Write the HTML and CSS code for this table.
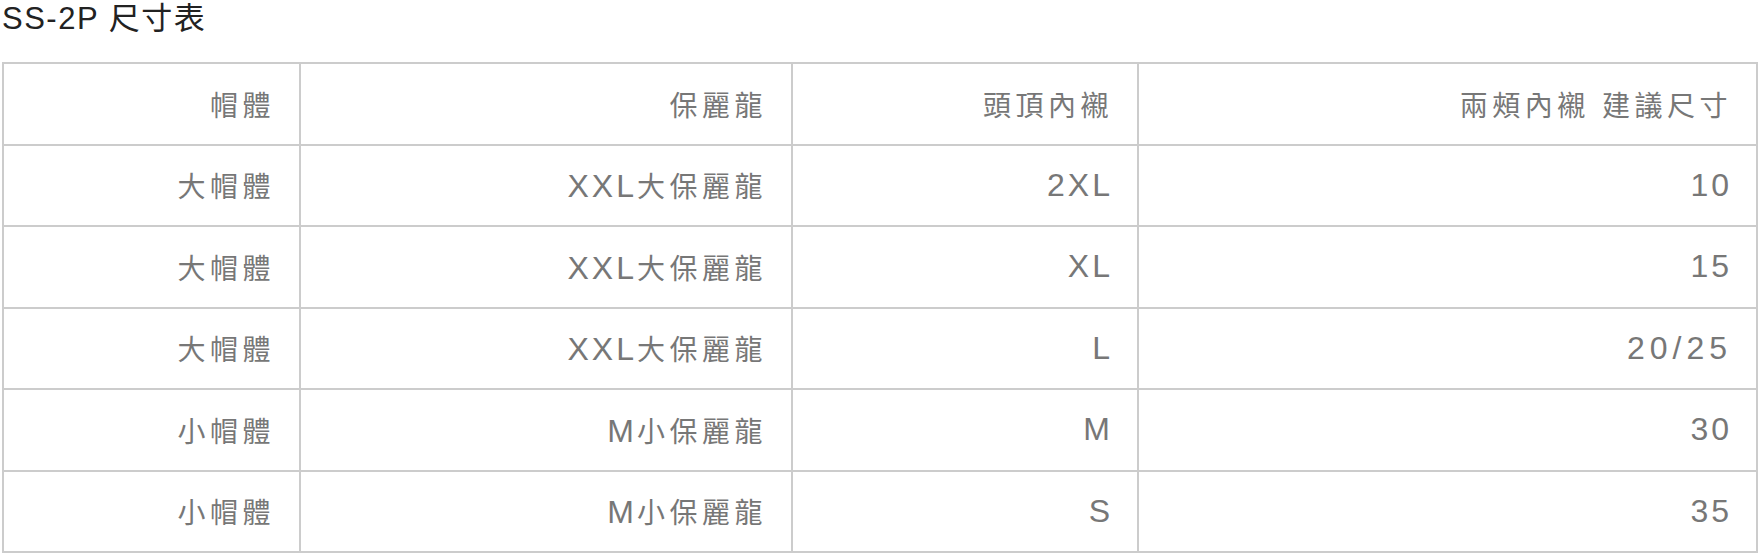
FILE: index.html
```html
<!DOCTYPE html>
<html lang="zh-Hant">
<head>
<meta charset="utf-8">
<title>SS-2P 尺寸表</title>
<link rel="stylesheet" href="styles.css">
</head>
<body>
<div class="page">
  <h1 class="title">SS-2P 尺寸表</h1>
  <table class="size-table">
    <colgroup>
      <col class="c1"><col class="c2"><col class="c3"><col class="c4">
    </colgroup>
    <thead>
      <tr>
        <th>帽體</th>
        <th>保麗龍</th>
        <th>頭頂內襯</th>
        <th>兩頰內襯 建議尺寸</th>
      </tr>
    </thead>
    <tbody>
      <tr>
        <td>大帽體</td>
        <td><span class="lat">XXL</span>大保麗龍</td>
        <td><span class="lat">2XL</span></td>
        <td><span class="lat">10</span></td>
      </tr>
      <tr>
        <td>大帽體</td>
        <td><span class="lat">XXL</span>大保麗龍</td>
        <td><span class="lat">XL</span></td>
        <td><span class="lat">15</span></td>
      </tr>
      <tr>
        <td>大帽體</td>
        <td><span class="lat">XXL</span>大保麗龍</td>
        <td><span class="lat">L</span></td>
        <td><span class="lat wide">20/25</span></td>
      </tr>
      <tr>
        <td>小帽體</td>
        <td><span class="lat">M</span>小保麗龍</td>
        <td><span class="lat">M</span></td>
        <td><span class="lat">30</span></td>
      </tr>
      <tr>
        <td>小帽體</td>
        <td><span class="lat">M</span>小保麗龍</td>
        <td><span class="lat">S</span></td>
        <td><span class="lat">35</span></td>
      </tr>
    </tbody>
  </table>
</div>
</body>
</html>
```

FILE: styles.css
```css
html, body {
  margin: 0;
  padding: 0;
  background: #ffffff;
}

.page {
  padding: 0 4px 0 2px;
  font-family: "Liberation Sans", "Noto Sans CJK TC", sans-serif;
}

.title {
  margin: 0;
  font-size: 31px;
  font-weight: normal;
  line-height: 38px;
  letter-spacing: 1.5px;
  color: #222222;
}

.size-table {
  margin-top: 24px;
  width: 100%;
  table-layout: fixed;
  border-collapse: collapse;
  border: 2px solid #cccccc;
}

.c1 { width: 297px; }
.c2 { width: 492px; }
.c3 { width: 346px; }
.c4 { width: 619px; }

.size-table th,
.size-table td {
  height: 79.5px;
  padding: 0 24px 0 10px;
  border: 2px solid #cccccc;
  text-align: right;
  vertical-align: middle;
  font-size: 28px;
  font-weight: normal;
  letter-spacing: 4.5px;
  color: #777777;
  white-space: nowrap;
}

.lat {
  font-family: "Liberation Sans", sans-serif;
  font-size: 32px;
  letter-spacing: 3px;
}

.wide {
  letter-spacing: 5px;
}
```
